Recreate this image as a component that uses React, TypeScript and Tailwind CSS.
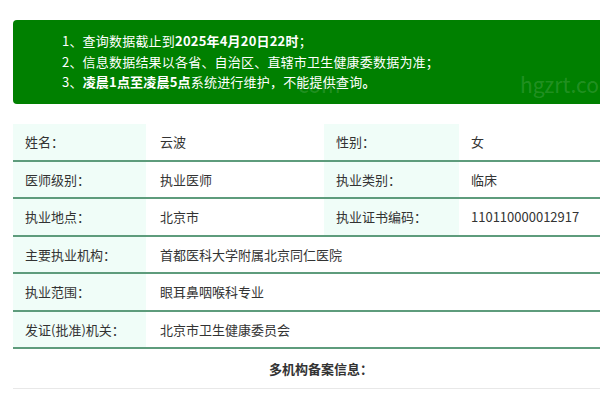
const font = { fontFamily: '"Microsoft YaHei", "Noto Sans CJK SC", "Noto Sans", sans-serif' };

interface Row {
  cells: [string, string] | [string, string, string, string];
}

const rows: Row[] = [
  { cells: ['姓名：', '云波', '性别：', '女'] },
  { cells: ['医师级别：', '执业医师', '执业类别：', '临床'] },
  { cells: ['执业地点：', '北京市', '执业证书编码：', '110110000012917'] },
  { cells: ['主要执业机构：', '首都医科大学附属北京同仁医院'] },
  { cells: ['执业范围：', '眼耳鼻咽喉科专业'] },
  { cells: ['发证(批准)机关：', '北京市卫生健康委员会'] },
];

function Label({ text, className = '' }: { text: string; className?: string }) {
  return <div className={`bg-[#f0fdf8] pl-3 flex items-center ${className}`}>{text}</div>;
}

export default function App() {
  return (
    <div className="relative w-[600px] h-[400px] overflow-hidden bg-white text-[13px] text-[#333]" style={font}>
      <div className="pt-5 pl-[13px]">
        <div className="w-[616px] h-[84px] rounded-[4px] bg-[#008000] text-white pl-[49px] pt-[11px] leading-[20.5px] tracking-[0.2px]">
          <p>
            1、查询数据截止到<b>2025年4月20日22时</b>；
          </p>
          <p>2、信息数据结果以各省、自治区、直辖市卫生健康委数据为准；</p>
          <p>
            3、<b>凌晨1点至凌晨5点</b>系统进行维护，不能提供查询<b>。</b>
          </p>
        </div>

        <div className="mt-5 w-[616px]">
          {rows.map((row, i) => (
            <div
              key={i}
              className="grid grid-cols-[133px_178px_135px_170px] h-[37.5px] border-b-2 border-[#5e9c7c]"
            >
              <Label text={row.cells[0]} />
              {row.cells.length === 4 ? (
                <>
                  <div className="pl-[14px] flex items-center">{row.cells[1]}</div>
                  <Label text={row.cells[2]} />
                  <div className="pl-3 flex items-center">{row.cells[3]}</div>
                </>
              ) : (
                <div className="col-span-3 pl-[14px] flex items-center">{row.cells[1]}</div>
              )}
            </div>
          ))}
          <div className="h-[40px] flex items-center justify-center font-bold border-b border-[#e8e8e8]">
            多机构备案信息：
          </div>
        </div>
      </div>

      {/* watermark */}
      <div className="absolute left-[298px] top-[72px] text-[21px] leading-[24px] text-white/15 pointer-events-none">com</div>
      <div className="absolute left-[520px] top-[72px] text-[21px] leading-[24px] text-white/15 pointer-events-none">hgzrt.co</div>
    </div>
  );
}
